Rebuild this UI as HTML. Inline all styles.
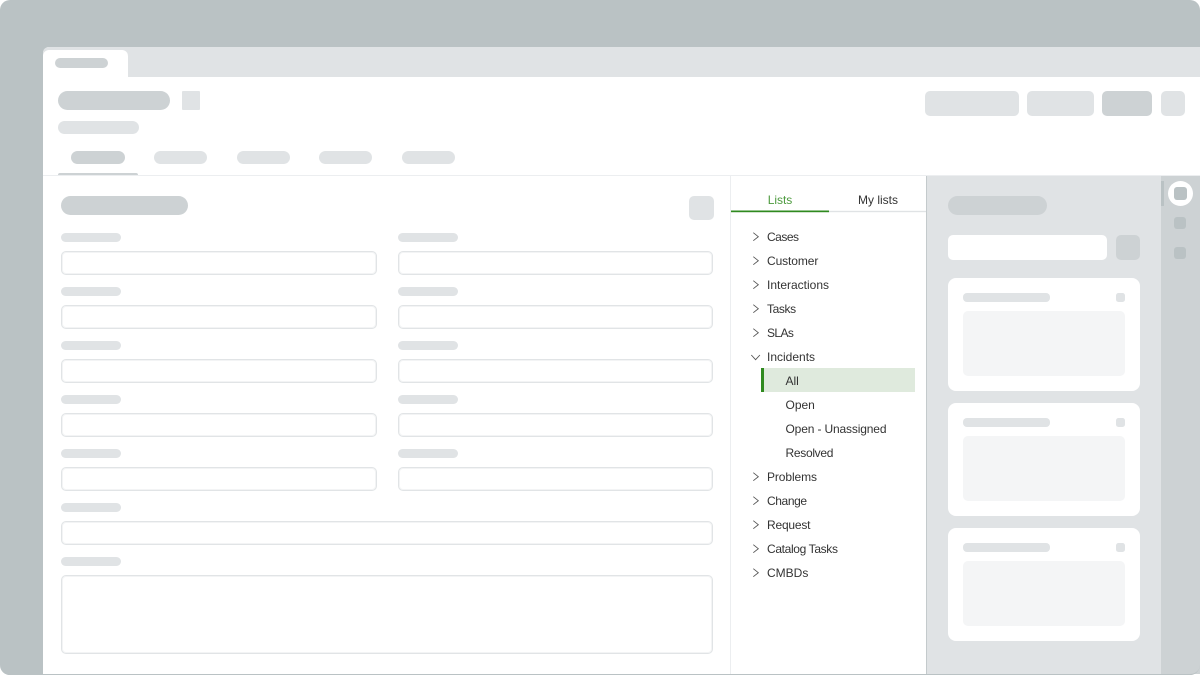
<!DOCTYPE html>
<html><head><meta charset="utf-8"><style>
html,body{margin:0;padding:0;background:#fff}
#r{position:relative;width:1200px;height:675px;overflow:hidden;background:#fff;font-family:"Liberation Sans",sans-serif}
#r div{position:absolute;box-sizing:border-box}
.d{background:#e0e3e5}.m{background:#cdd2d4}
.in{background:#fff;border:1px solid #e1e4e6;box-shadow:inset 0 0 0 1px #f3f4f5;border-radius:5px;height:24px}
.lb{background:#e0e3e5;border-radius:5px;height:9px;width:60px}
.t{font-size:12px;line-height:16px;color:#333;white-space:nowrap}
svg{position:absolute;overflow:visible}
.card{background:#fff;border-radius:8px;left:948px;width:192px;height:113px}
.cl{background:#e0e3e5;border-radius:4px;height:9px;width:87px;left:15px;top:15px}
.cs{background:#e0e3e5;border-radius:2.500px;width:9px;height:9px;left:168px;top:15px}
.cb{background:#f4f5f6;border-radius:5px;left:15px;top:33px;width:162px;height:65px}
</style></head><body><div id="r">
<div style="left:0;top:0;width:1200px;height:675px;background:#bac2c4;border-radius:10px"></div>
<div style="left:43px;top:47px;width:1157px;height:627px;background:#fff;border-top-left-radius:6px"></div>
<div style="left:43px;top:47px;width:1157px;height:30px;background:#e0e3e5;border-top-left-radius:6px"></div>
<div style="left:43px;top:50px;width:85px;height:27px;background:#fff;border-radius:6px 6px 0 0"></div>
<div class="m" style="left:55px;top:58px;width:53px;height:10px;border-radius:5px"></div>
<div class="m" style="left:58px;top:91px;width:112px;height:19px;border-radius:10px"></div>
<div class="d" style="left:182px;top:91px;width:18px;height:19px;border-radius:1px"></div>
<div class="d" style="left:58px;top:121px;width:81px;height:13px;border-radius:7px"></div>
<div class="d" style="left:925px;top:91px;width:94px;height:25px;border-radius:5px"></div>
<div class="d" style="left:1027px;top:91px;width:67px;height:25px;border-radius:5px"></div>
<div class="m" style="left:1102px;top:91px;width:50px;height:25px;border-radius:5px"></div>
<div class="d" style="left:1161px;top:91px;width:24px;height:25px;border-radius:5px"></div>
<div class="m" style="left:71px;top:151px;width:54px;height:13px;border-radius:7px"></div>
<div class="d" style="left:154px;top:151px;width:53px;height:13px;border-radius:7px"></div>
<div class="d" style="left:237px;top:151px;width:53px;height:13px;border-radius:7px"></div>
<div class="d" style="left:319px;top:151px;width:53px;height:13px;border-radius:7px"></div>
<div class="d" style="left:402px;top:151px;width:53px;height:13px;border-radius:7px"></div>
<div class="m" style="left:58px;top:173px;width:80px;height:3px;border-radius:2px 2px 0 0"></div>
<div style="left:43px;top:175px;width:1157px;height:1px;background:#eceef0"></div>

<div class="m" style="left:61px;top:196px;width:127px;height:19px;border-radius:10px"></div>
<div class="d" style="left:689px;top:196px;width:25px;height:24px;border-radius:5px"></div>

<div class="lb" style="left:61px;top:233px"></div><div class="lb" style="left:398px;top:233px"></div>
<div class="in" style="left:61px;top:251px;width:316px"></div><div class="in" style="left:398px;top:251px;width:315px"></div>
<div class="lb" style="left:61px;top:287px"></div><div class="lb" style="left:398px;top:287px"></div>
<div class="in" style="left:61px;top:305px;width:316px"></div><div class="in" style="left:398px;top:305px;width:315px"></div>
<div class="lb" style="left:61px;top:341px"></div><div class="lb" style="left:398px;top:341px"></div>
<div class="in" style="left:61px;top:359px;width:316px"></div><div class="in" style="left:398px;top:359px;width:315px"></div>
<div class="lb" style="left:61px;top:395px"></div><div class="lb" style="left:398px;top:395px"></div>
<div class="in" style="left:61px;top:413px;width:316px"></div><div class="in" style="left:398px;top:413px;width:315px"></div>
<div class="lb" style="left:61px;top:449px"></div><div class="lb" style="left:398px;top:449px"></div>
<div class="in" style="left:61px;top:467px;width:316px"></div><div class="in" style="left:398px;top:467px;width:315px"></div>
<div class="lb" style="left:61px;top:503px"></div>
<div class="in" style="left:61px;top:521px;width:652px"></div>
<div class="lb" style="left:61px;top:557px"></div>
<div class="in" style="left:61px;top:575px;width:652px;height:79px"></div>

<div style="left:730px;top:176px;width:1px;height:498px;background:#eceef0"></div>
<svg style="left:0;top:0" width="1200" height="675">
<rect x="731" y="210.800" width="195" height="1.400" fill="#e0e3e5"/>
<rect x="731" y="210.500" width="98" height="1.700" fill="#2f8a1f"/>
</svg>
<div class="t" style="left:731px;top:192px;width:98px;text-align:center;color:#4d9a3e;letter-spacing:-.05px">Lists</div>
<div class="t" style="left:829px;top:192px;width:98px;text-align:center">My lists</div>

<div class="t" style="left:767px;top:229px;letter-spacing:-.5px">Cases</div>
<div class="t" style="left:767px;top:253px;letter-spacing:-.1px">Customer</div>
<div class="t" style="left:767px;top:277px">Interactions</div>
<div class="t" style="left:767px;top:301px;letter-spacing:-.4px">Tasks</div>
<div class="t" style="left:767px;top:325px;letter-spacing:-.6px">SLAs</div>
<div class="t" style="left:767px;top:349px">Incidents</div>
<div style="left:761px;top:368px;width:154px;height:24px;background:#dfeadd"></div>
<div style="left:761px;top:368px;width:3px;height:24px;background:#2f8a1f"></div>
<div class="t" style="left:785.500px;top:373px">All</div>
<div class="t" style="left:785.500px;top:397px">Open</div>
<div class="t" style="left:785.500px;top:421px;letter-spacing:-.15px">Open - Unassigned</div>
<div class="t" style="left:785.500px;top:445px;letter-spacing:-.3px">Resolved</div>
<div class="t" style="left:767px;top:469px;letter-spacing:-.1px">Problems</div>
<div class="t" style="left:767px;top:493px;letter-spacing:-.4px">Change</div>
<div class="t" style="left:767px;top:517px;letter-spacing:-.2px">Request</div>
<div class="t" style="left:767px;top:541px;letter-spacing:-.35px">Catalog Tasks</div>
<div class="t" style="left:767px;top:565px">CMBDs</div>

<svg style="left:0;top:0" width="1200" height="675" fill="none" stroke="#555" stroke-width=".9">
<path d="M753.300 232.700l5 4-5 4M753.300 256.700l5 4-5 4M753.300 280.700l5 4-5 4M753.300 304.700l5 4-5 4M753.300 328.700l5 4-5 4M753.300 472.700l5 4-5 4M753.300 496.700l5 4-5 4M753.300 520.700l5 4-5 4M753.300 544.700l5 4-5 4M753.300 568.700l5 4-5 4"/>
<path d="M751.300 355l4.300 4.700 4.300-4.700"/>
</svg>

<div style="left:926px;top:176px;width:235px;height:498px;background:#e0e3e5;border-left:1px solid #c4cacc"></div>
<div style="left:1161px;top:176px;width:39px;height:498px;background:#cdd2d4"></div>
<div class="m" style="left:948px;top:196px;width:99px;height:19px;border-radius:10px"></div>
<div style="left:948px;top:235px;width:159px;height:25px;background:#fff;border-radius:5px"></div>
<div class="m" style="left:1116px;top:235px;width:24px;height:25px;border-radius:5px"></div>
<div class="card" style="top:278px"><div class="cl"></div><div class="cs"></div><div class="cb"></div></div>
<div class="card" style="top:403px"><div class="cl"></div><div class="cs"></div><div class="cb"></div></div>
<div class="card" style="top:528px"><div class="cl"></div><div class="cs"></div><div class="cb"></div></div>
<div style="left:1161px;top:181px;width:3px;height:25px;background:#bac2c4"></div>
<div style="left:1168px;top:181px;width:25px;height:25px;border-radius:50%;background:#fff"></div>
<div style="left:1174px;top:187px;width:13px;height:13px;border-radius:3px;background:#bac2c4"></div>
<div style="left:1174px;top:217px;width:12px;height:12px;border-radius:3px;background:#bac2c4"></div>
<div style="left:1174px;top:247px;width:12px;height:12px;border-radius:3px;background:#bac2c4"></div>
<div style="left:0;top:0;width:1200px;height:675px;border-bottom:1px solid #bac2c4;border-radius:10px"></div>
</div></body></html>
